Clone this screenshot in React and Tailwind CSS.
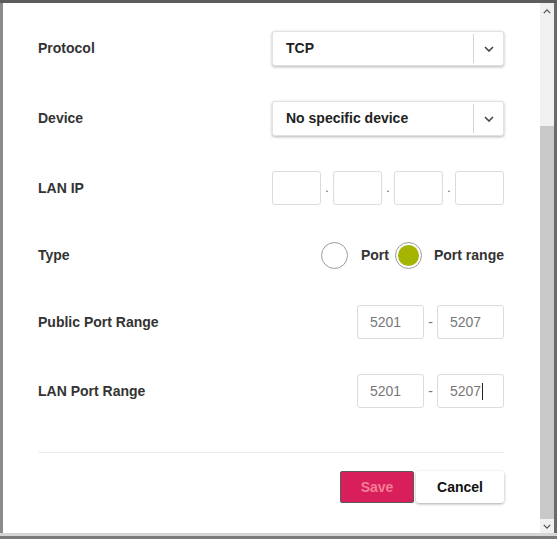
import React from 'react';

const font = { fontFamily: '"Liberation Sans", Arial, sans-serif' };

function Chevron({ className }) {
  return (
    <svg className={className} viewBox="0 0 10 6" fill="none" stroke="currentColor" strokeWidth="1.6">
      <path d="M1 1l4 4 4-4" />
    </svg>
  );
}

function Select({ value }) {
  return (
    <div className="flex h-[35px] w-[232px] items-center rounded-[3px] border border-[#e2e2e2] bg-white shadow-[0_1px_3px_rgba(0,0,0,0.3)]">
      <span className="flex-1 pl-[13px] text-[14px] font-bold text-[#222]">{value}</span>
      <div className="h-[29px] w-px bg-[#d4d4d4]" />
      <div className="flex w-[29px] items-center justify-center">
        <Chevron className="h-[6px] w-[10px] text-[#444]" />
      </div>
    </div>
  );
}

function Box({ className }) {
  return <div className={`h-[34px] rounded-[3px] border border-[#dcdcdc] bg-white ${className}`} />;
}

function PortInput({ value, caret }) {
  return (
    <div className="flex h-[34px] w-[67px] items-center rounded-[3px] border border-[#dcdcdc] bg-white pl-[12px] text-[14px] text-[#777]">
      {value}
      {caret && <span className="ml-px inline-block h-[17px] w-px bg-[#222]" />}
    </div>
  );
}

function PortRange({ from, to, caret }) {
  return (
    <div className="flex items-center">
      <PortInput value={from} />
      <span className="w-[13px] text-center text-[14px] text-[#777]">-</span>
      <PortInput value={to} caret={caret} />
    </div>
  );
}

function Row({ label, children, h }) {
  return (
    <div className={`flex items-center justify-between ${h}`}>
      <span className="text-[14px] font-bold text-[#333]">{label}</span>
      {children}
    </div>
  );
}

export default function App() {
  return (
    <div className="flex h-[539px] w-[557px] flex-col bg-[#8a8a8a]" style={font}>
      {/* backdrop strip */}
      <div className="h-[3px] bg-[#5c5c5c]" />
      <div className="flex flex-1">
        <div className="w-[3px]" />
        {/* modal */}
        <div className="flex w-[537px] flex-col bg-white pl-[35px] pr-[36px] pt-[28px]">
          <div className="flex flex-col gap-[35px]">
            <Row label="Protocol" h="h-[35px]">
              <Select value="TCP" />
            </Row>
            <Row label="Device" h="h-[35px]">
              <Select value="No specific device" />
            </Row>
            <Row label="LAN IP" h="h-[34px]">
              <div className="flex items-center">
                <Box className="w-[49px]" />
                <span className="w-[12px] text-center text-[12px] leading-none text-[#555]">.</span>
                <Box className="w-[49px]" />
                <span className="w-[12px] text-center text-[12px] leading-none text-[#555]">.</span>
                <Box className="w-[49px]" />
                <span className="w-[12px] text-center text-[12px] leading-none text-[#555]">.</span>
                <Box className="w-[49px]" />
              </div>
            </Row>
            <Row label="Type" h="h-[30px]">
              <div className="flex items-center">
                <div className="h-[27px] w-[27px] rounded-full border border-[#9a9a9a] bg-white" />
                <span className="ml-[13px] text-[14px] font-bold text-[#333]">Port</span>
                <div className="ml-[6px] flex h-[27px] w-[27px] items-center justify-center rounded-full border border-[#9a9a9a] bg-white">
                  <div className="h-[21px] w-[21px] rounded-full bg-[#a5b400]" />
                </div>
                <span className="ml-[12px] text-[14px] font-bold text-[#333]">Port range</span>
              </div>
            </Row>
            <Row label="Public Port Range" h="h-[34px]">
              <PortRange from="5201" to="5207" />
            </Row>
            <Row label="LAN Port Range" h="h-[34px]">
              <PortRange from="5201" to="5207" caret />
            </Row>
          </div>
          <div className="mt-[44px] h-px bg-[#ececec]" />
          <div className="mt-[18px] flex justify-end gap-[2px]">
            <button className="h-[32px] w-[74px] rounded-[2px] border border-[#5a5a5a] bg-[#d81f5b] text-[14px] font-bold text-[#f37f97]">
              Save
            </button>
            <button className="h-[32px] w-[88px] rounded-[3px] bg-white text-[14px] font-bold text-[#111] shadow-[0_1px_3px_rgba(0,0,0,0.35)]">
              Cancel
            </button>
          </div>
        </div>
        {/* scrollbar */}
        <div className="flex w-[14px] flex-col bg-[#f0f0f0]">
          <div className="flex h-[17px] items-center justify-center">
            <Chevron className="h-[5px] w-[8px] rotate-180 text-[#555]" />
          </div>
          <div className="h-[106px]" />
          <div className="flex-1 bg-[#c8c8c8]" />
          <div className="flex h-[14px] items-center justify-center">
            <Chevron className="h-[5px] w-[8px] text-[#555]" />
          </div>
        </div>
        <div className="w-[3px] bg-[#6a6a6a]" />
      </div>
      <div className="h-[3px] bg-[#d6d6d6]" />
      <div className="h-[3px] bg-[#7a7a7a]" />
    </div>
  );
}
